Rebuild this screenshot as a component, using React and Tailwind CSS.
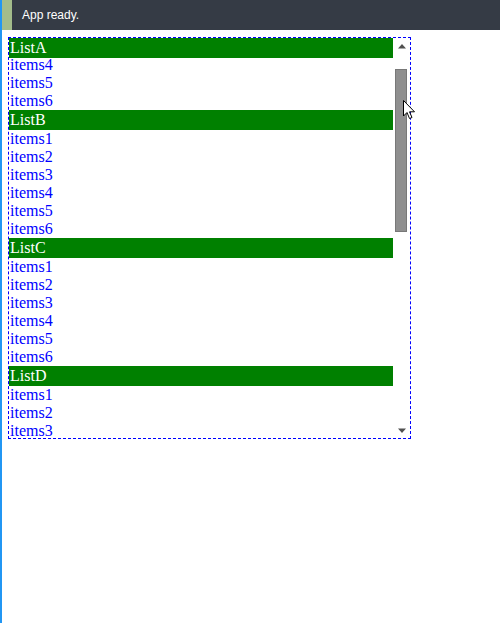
import { useEffect, useRef } from "react";

const lists = ["ListA", "ListB", "ListC", "ListD", "ListE", "ListF", "ListG"];
const items = ["items1", "items2", "items3", "items4", "items5", "items6"];

function Arrow({ down }) {
  return (
    <div className="h-[16px] flex items-center justify-center">
      <svg width="8" height="5" viewBox="0 0 8 5" className={down ? "rotate-180" : ""}>
        <path d="M4 0 L8 4.5 L0 4.5 Z" fill="#505050" />
      </svg>
    </div>
  );
}

function Cursor() {
  return (
    <svg
      width="13"
      height="20"
      viewBox="0 0 13 20"
      className="absolute left-[394px] top-[62px] pointer-events-none"
    >
      <path
        d="M0.5 0.5 L0.5 16 L4 12.5 L6.5 18.5 L9 17.5 L6.5 11.8 L11.5 11.8 Z"
        fill="#fff"
        stroke="#000"
        strokeWidth="1"
        strokeLinejoin="round"
      />
    </svg>
  );
}

export default function App() {
  const listRef = useRef(null);

  useEffect(() => {
    if (listRef.current) listRef.current.scrollTop = 56;
  }, []);

  return (
    <div className="flex h-[623px] w-[500px] bg-white">
      <div className="w-[2px] bg-[#2196f3]" />
      <div className="flex-1 flex flex-col">
        {/* Status bar */}
        <div className="h-[30px] flex items-center bg-[#353b45]">
          <div className="w-[10px] h-full bg-[#a3bc8b]" />
          <span
            className="pl-[10px] text-[12px] text-white"
            style={{ fontFamily: "'Liberation Sans', Arial, sans-serif" }}
          >
            App ready.
          </span>
        </div>

        {/* List box */}
        <div className="pt-[7px] pl-[6px]">
          <div className="relative w-[403px] h-[402px] border border-dashed border-[#0000ff] flex">
            <div
              ref={listRef}
              className="flex-1 overflow-y-scroll [scrollbar-width:none]"
              style={{ fontFamily: "'Liberation Serif', 'Times New Roman', serif" }}
            >
              {lists.map((name) => (
                <section key={name}>
                  <div className="sticky top-0 h-[20px] leading-[20px] pl-[1px] text-[16px] bg-[#008000] text-white">
                    {name}
                  </div>
                  {items.map((it) => (
                    <div key={it} className="h-[18px] leading-[18px] pl-[1px] text-[16px] text-[#0000ff]">
                      {it}
                    </div>
                  ))}
                </section>
              ))}
            </div>

            {/* Scrollbar */}
            <div className="w-[17px] flex flex-col bg-white">
              <Arrow />
              <div className="flex-1">
                <div className="mt-[15px] ml-[2px] mr-[3px] h-[163px] bg-[#8f8f8f] border border-[#787878]" />
              </div>
              <Arrow down />
            </div>

            <Cursor />
          </div>
        </div>
      </div>
    </div>
  );
}
